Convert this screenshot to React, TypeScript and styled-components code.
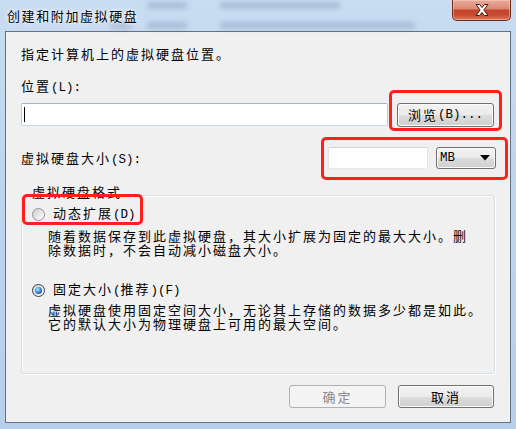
import React from "react";
import styled, { createGlobalStyle, css } from "styled-components";

const GlobalStyle = createGlobalStyle`
  html, body { margin: 0; padding: 0; }
  body {
    width: 516px;
    height: 429px;
    overflow: hidden;
    font-family: "Noto Sans CJK SC", "Noto Sans CJK JP", "Noto Sans", sans-serif;
  }
`;

const Window = styled.div`
  width: 516px;
  height: 429px;
  box-sizing: border-box;
  padding: 0 5px 6px 5px;
  display: flex;
  flex-direction: column;
  background: linear-gradient(180deg, #c8dcf2 0%, #bfd5ee 40%, #b7cfea 100%);
`;

const TitleBar = styled.div`
  position: relative;
  height: 31px;
  flex: none;
  display: flex;
  justify-content: space-between;
  align-items: flex-start;
`;

const Blob = styled.span<{ $x: number; $y: number; $w: number }>`
  position: absolute;
  left: ${(p) => p.$x}px;
  top: ${(p) => p.$y}px;
  width: ${(p) => p.$w}px;
  height: 7px;
  background: rgba(96, 116, 146, 0.28);
  filter: blur(2.5px);
  border-radius: 3px;
`;

const TitleText = styled.div`
  position: relative;
  z-index: 1;
  margin: 7px 0 0 2px;
  font-size: 13px;
  letter-spacing: 1.6px;
  line-height: 17px;
  color: #000;
  text-shadow: 0 0 6px rgba(255, 255, 255, 0.95), 0 0 3px rgba(255, 255, 255, 0.9);
`;

const CloseButton = styled.div`
  position: relative;
  z-index: 1;
  width: 59px;
  height: 21px;
  box-sizing: border-box;
  border: 1px solid #6b2b1f;
  border-top: none;
  border-radius: 0 0 5px 5px;
  background: linear-gradient(
    180deg,
    #e9ab9a 0%,
    #dc8c76 42%,
    #c5442b 52%,
    #c84a30 75%,
    #de7a5c 100%
  );
  box-shadow: inset 0 0 0 1px rgba(255, 220, 210, 0.45);
  display: flex;
  align-items: center;
  justify-content: center;
`;

const Client = styled.div`
  flex: 1;
  box-sizing: border-box;
  border: 1px solid #647281;
  background: #f0f0f0;
  padding: 14px 15px 0 15px;
  display: flex;
  flex-direction: column;
  font-size: 13px;
  letter-spacing: 2px;
  color: #000;
`;

const Line = styled.div<{ $mt?: number }>`
  line-height: 16px;
  height: 16px;
  white-space: nowrap;
  margin-top: ${(p) => p.$mt ?? 0}px;
`;

const Mono = styled.span`
  font-family: "Liberation Mono", "DejaVu Sans Mono", monospace;
  font-size: 12.5px;
  letter-spacing: 0;
`;

const Row = styled.div<{ $mt: number; $h: number }>`
  display: flex;
  align-items: center;
  margin-top: ${(p) => p.$mt}px;
  height: ${(p) => p.$h}px;
  gap: 9px;
`;

const TextBox = styled.div<{ $focused?: boolean; $w?: number }>`
  box-sizing: border-box;
  height: ${(p) => (p.$focused ? 23 : 22)}px;
  align-self: flex-start;
  ${(p) => (p.$w ? css`width: ${p.$w}px;` : css`flex: 1;`)}
  background: #fff;
  border: 1px solid;
  border-radius: 2px;
  ${(p) =>
    p.$focused
      ? css`
          border-color: #9fb6cf #b4cde6 #c3d8ec #b4cde6;
        `
      : css`
          border-color: #cfd4da #e1e5ea #e6eaee #e1e5ea;
        `}
  display: flex;
  align-items: center;
`;

const Caret = styled.span`
  width: 1px;
  height: 15px;
  margin-left: 2px;
  background: #000;
`;

const Anchor = styled.div<{ $mr?: number; $ml?: string }>`
  position: relative;
  display: flex;
  align-items: center;
  gap: 8px;
  margin-right: ${(p) => p.$mr ?? 0}px;
  ${(p) => p.$ml && css`margin-left: ${p.$ml};`}
`;

const Highlight = styled.div<{ $t: number; $l: number; $w: number; $h: number }>`
  position: absolute;
  top: ${(p) => p.$t}px;
  left: ${(p) => p.$l}px;
  width: ${(p) => p.$w}px;
  height: ${(p) => p.$h}px;
  box-sizing: border-box;
  border: 3px solid #ff1f1f;
  border-radius: 5px;
  pointer-events: none;
  z-index: 2;
`;

const Button = styled.div<{ $w: number; $h: number; $disabled?: boolean }>`
  box-sizing: border-box;
  width: ${(p) => p.$w}px;
  height: ${(p) => p.$h}px;
  border-radius: 3px;
  display: flex;
  align-items: center;
  justify-content: center;
  line-height: 16px;
  white-space: nowrap;
  ${(p) =>
    p.$disabled
      ? css`
          border: 1px solid #adb2b5;
          background: #f4f4f4;
          color: #8a8a8a;
        `
      : css`
          border: 1px solid #707070;
          background: linear-gradient(180deg, #f2f2f2 0%, #ebebeb 50%, #dddddd 51%, #cfcfcf 100%);
          box-shadow: inset 0 0 0 1px #fbfbfb;
          color: #000;
        `}
`;

const Combo = styled.div`
  box-sizing: border-box;
  width: 60px;
  height: 22px;
  border: 1px solid #707070;
  border-radius: 3px;
  background: linear-gradient(180deg, #f2f2f2 0%, #ebebeb 50%, #dddddd 51%, #cfcfcf 100%);
  box-shadow: inset 0 0 0 1px #fbfbfb;
  display: flex;
  align-items: center;
  padding: 0 5px 0 3px;
  justify-content: space-between;
`;

const GroupBox = styled.div`
  position: relative;
  margin-top: 26px;
  height: 179px;
  box-sizing: border-box;
  border: 1px solid #d5dfe5;
  border-radius: 3px;
  box-shadow: inset 1px 1px 0 #ffffff, 1px 1px 0 #ffffff;
  display: flex;
  flex-direction: column;
`;

const Legend = styled.div`
  align-self: flex-start;
  margin: -12px 0 0 9px;
  padding: 0 1px;
  background: #f0f0f0;
  line-height: 16px;
  height: 16px;
  white-space: nowrap;
`;

const RadioRow = styled.div<{ $mt: number }>`
  position: relative;
  display: flex;
  align-items: center;
  gap: 8px;
  height: 16px;
  line-height: 16px;
  margin-top: ${(p) => p.$mt}px;
  padding-left: 10px;
  white-space: nowrap;
`;

const Radio = styled.span<{ $checked?: boolean }>`
  width: 13px;
  height: 13px;
  box-sizing: border-box;
  border-radius: 50%;
  flex: none;
  display: flex;
  align-items: center;
  justify-content: center;
  border: 1px solid ${(p) => (p.$checked ? "#2d3e52" : "#8c9196")};
  background: linear-gradient(135deg, #d2d2d2 0%, #eeeeee 60%, #ffffff 100%);
  &::after {
    content: "";
    width: ${(p) => (p.$checked ? 7 : 9)}px;
    height: ${(p) => (p.$checked ? 7 : 9)}px;
    border-radius: 50%;
    background: ${(p) =>
      p.$checked
        ? "radial-gradient(circle at 38% 35%, #c4ecff 0%, #52a6e8 35%, #1a5ca8 70%, #0b3161 100%)"
        : "linear-gradient(135deg, #cfcfcf 0%, #e8e8e8 55%, #fbfbfb 100%)"};
  }
`;

const Desc = styled.div<{ $mt: number }>`
  margin-top: ${(p) => p.$mt}px;
  padding-left: 26px;
  line-height: 14px;
  white-space: nowrap;
`;

const Footer = styled.div`
  margin-top: 11px;
  display: flex;
  justify-content: flex-end;
  gap: 12px;
  padding-right: 1px;
`;

const XIcon = () => (
  <svg width="16" height="14" viewBox="0 0 16 14">
    <path
      d="M2 1.5 L5.6 1.5 L8 4.6 L10.4 1.5 L14 1.5 L9.9 7 L14 12.5 L10.4 12.5 L8 9.4 L5.6 12.5 L2 12.5 L6.1 7 Z"
      fill="#ffffff"
      stroke="#4a1a12"
      strokeWidth="1"
      strokeLinejoin="round"
    />
  </svg>
);

const Arrow = () => (
  <svg width="10" height="6" viewBox="0 0 10 6">
    <path d="M0 0 H10 L5 5.5 Z" fill="#000" />
  </svg>
);

export default function App() {
  return (
    <>
      <GlobalStyle />
      <Window>
        <TitleBar>
          <Blob $x={142} $y={2} $w={40} />
          <Blob $x={215} $y={2} $w={120} />
          <Blob $x={105} $y={22} $w={22} />
          <Blob $x={142} $y={22} $w={40} />
          <Blob $x={215} $y={22} $w={195} />
          <TitleText>创建和附加虚拟硬盘</TitleText>
          <CloseButton>
            <XIcon />
          </CloseButton>
        </TitleBar>
        <Client>
          <Line>指定计算机上的虚拟硬盘位置。</Line>
          <Line $mt={16}>
            位置<Mono>(L):</Mono>
          </Line>
          <Row $mt={9} $h={24}>
            <TextBox $focused>
              <Caret />
            </TextBox>
            <Anchor $mr={1}>
              <Highlight $t={-13} $l={-8} $w={113} $h={41} />
              <Button $w={97} $h={24}>
                浏览<Mono>(B)...</Mono>
              </Button>
            </Anchor>
          </Row>
          <Row $mt={20} $h={22}>
            <Line>
              虚拟硬盘大小<Mono>(S):</Mono>
            </Line>
            <Anchor $ml="auto" $mr={-1}>
              <Highlight $t={-10} $l={-7} $w={187} $h={43} />
              <TextBox $w={100} />
              <Combo>
                <Mono>MB</Mono>
                <Arrow />
              </Combo>
            </Anchor>
          </Row>
          <GroupBox>
            <Legend>虚拟硬盘格式</Legend>
            <RadioRow $mt={6}>
              <Highlight $t={-12} $l={0} $w={121} $h={31} />
              <Radio />
              <span>
                动态扩展<Mono>(D)</Mono>
              </span>
            </RadioRow>
            <Desc $mt={7}>
              随着数据保存到此虚拟硬盘，其大小扩展为固定的最大大小。删
              <br />
              除数据时，不会自动减小磁盘大小。
            </Desc>
            <RadioRow $mt={25}>
              <Radio $checked />
              <span>
                固定大小<Mono>(</Mono>推荐<Mono>)(F)</Mono>
              </span>
            </RadioRow>
            <Desc $mt={5}>
              虚拟硬盘使用固定空间大小，无论其上存储的数据多少都是如此。
              <br />
              它的默认大小为物理硬盘上可用的最大空间。
            </Desc>
          </GroupBox>
          <Footer>
            <Button $w={97} $h={23} $disabled>
              确定
            </Button>
            <Button $w={96} $h={23}>
              取消
            </Button>
          </Footer>
        </Client>
      </Window>
    </>
  );
}
